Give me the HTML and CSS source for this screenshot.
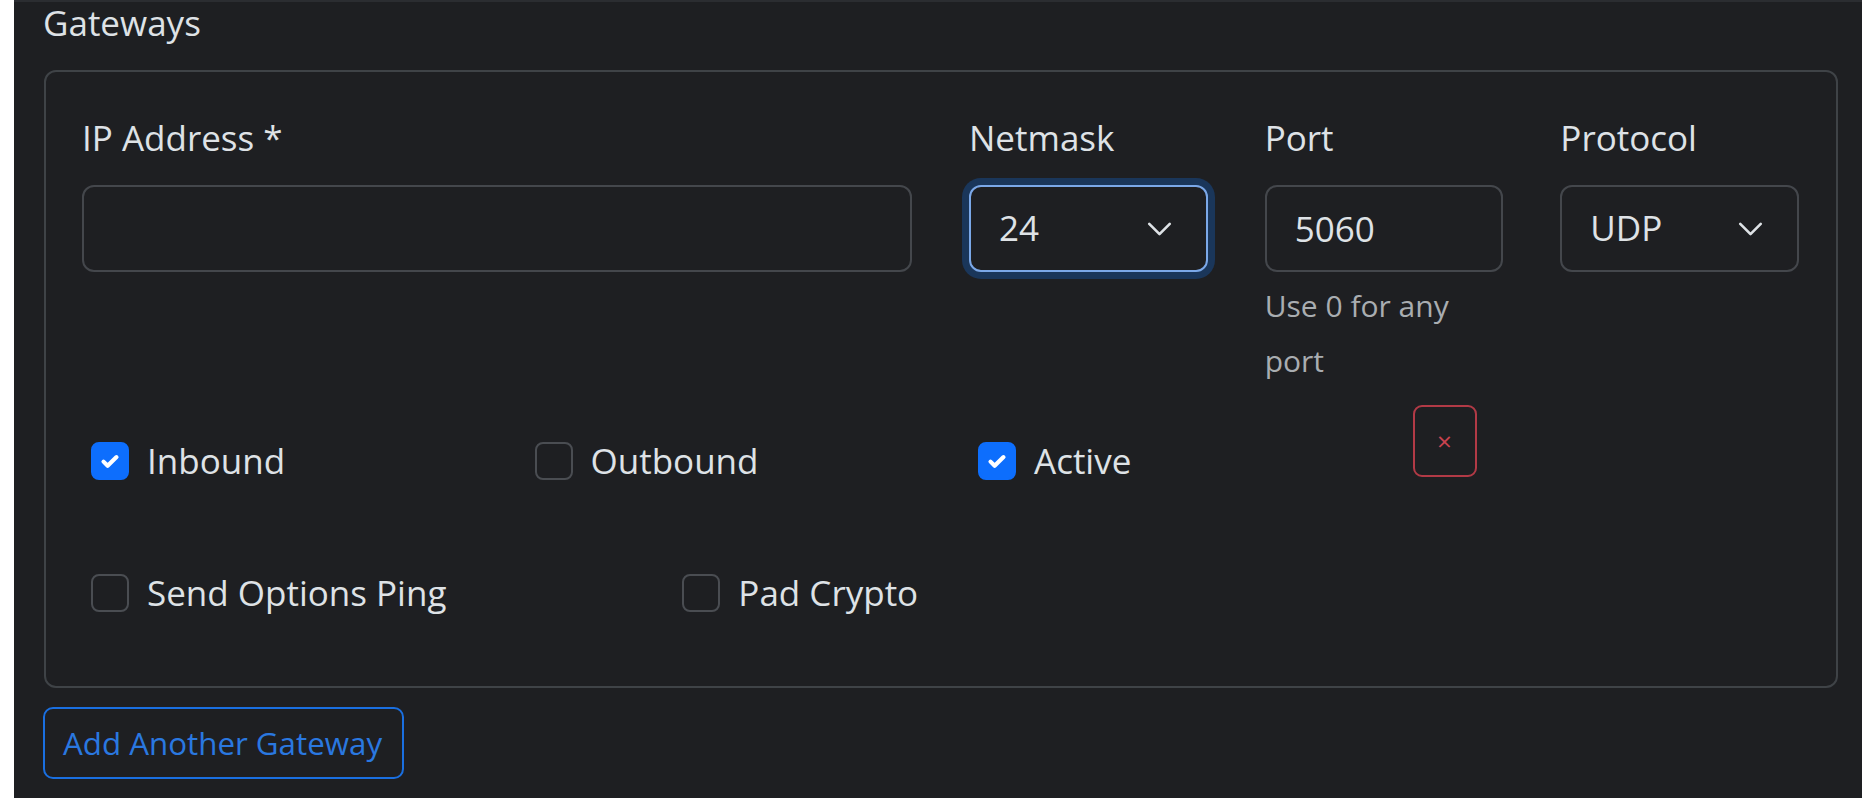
FILE: index.html
```html
<!DOCTYPE html>
<html lang="en">
<head>
<meta charset="utf-8">
<title>Gateways</title>
<link rel="stylesheet" href="styles.css">
</head>
<body>
<div class="panel">
  <div class="title">Gateways</div>
  <div class="card">
    <div class="grid fields">
      <div class="field span6">
        <label class="label">IP Address *</label>
        <input class="control" type="text" value="">
      </div>
      <div class="field span2">
        <label class="label">Netmask</label>
        <div class="select-wrap">
          <select class="control select focused"><option>24</option></select>
          <svg class="chevron" viewBox="0 0 26 15" width="25" height="14"><path d="M2 2l11 11L24 2" fill="none" stroke="#dee2e6" stroke-width="2.8" stroke-linecap="round" stroke-linejoin="round"/></svg>
        </div>
      </div>
      <div class="field span2">
        <label class="label">Port</label>
        <input class="control" type="text" value="5060">
        <div class="help">Use 0 for any<br>port</div>
      </div>
      <div class="field span2">
        <label class="label">Protocol</label>
        <div class="select-wrap">
          <select class="control select"><option>UDP</option></select>
          <svg class="chevron" viewBox="0 0 26 15" width="25" height="14"><path d="M2 2l11 11L24 2" fill="none" stroke="#dee2e6" stroke-width="2.8" stroke-linecap="round" stroke-linejoin="round"/></svg>
        </div>
      </div>
    </div>

    <div class="grid flags">
      <div class="span3"><div class="check"><span class="box on"><svg viewBox="0 0 20 20" width="26" height="26"><path d="M5 10.5l3.2 3.2L15 7" fill="none" stroke="#fff" stroke-width="3.2" stroke-linecap="round" stroke-linejoin="round"/></svg></span><span class="check-label">Inbound</span></div></div>
      <div class="span3"><div class="check"><span class="box"></span><span class="check-label">Outbound</span></div></div>
      <div class="span3"><div class="check"><span class="box on"><svg viewBox="0 0 20 20" width="26" height="26"><path d="M5 10.5l3.2 3.2L15 7" fill="none" stroke="#fff" stroke-width="3.2" stroke-linecap="round" stroke-linejoin="round"/></svg></span><span class="check-label">Active</span></div></div>
      <div class="span3"><button class="remove" type="button">×</button></div>
    </div>

    <div class="grid flags2">
      <div class="span4"><div class="check"><span class="box"></span><span class="check-label">Send Options Ping</span></div></div>
      <div class="span4"><div class="check"><span class="box"></span><span class="check-label">Pad Crypto</span></div></div>
    </div>
  </div>
  <button class="add" type="button">Add Another Gateway</button>
</div>
</body>
</html>
```

FILE: styles.css
```css
html, body {
  margin: 0;
  padding: 0;
  height: 100%;
  background: #ffffff;
}

body {
  font-family: "Open Sans", "Noto Sans", sans-serif;
  overflow: hidden;
}

.panel {
  margin-left: 14px;
  height: 100%;
  box-sizing: border-box;
  background: #1e1f22;
  border-top: 2px solid #2b2d31;
  padding: 0 24px 0 29px;
  color: #dee2e6;
}

.title {
  font-size: 35px;
  line-height: 42px;
  color: #dee2e6;
}

.card {
  margin-top: 26px;
  margin-left: 1px;
  border: 2px solid #3f4347;
  border-radius: 12px;
  padding: 40px 37px 67px 36px;
}

.grid {
  display: grid;
  grid-template-columns: repeat(12, 1fr);
  column-gap: 57px;
  align-items: start;
}

.span6 { grid-column: span 6; }
.span4 { grid-column: span 4; }
.span3 { grid-column: span 3; }
.span2 { grid-column: span 2; }

.field {
  display: flex;
  flex-direction: column;
}

.label {
  font-size: 35px;
  line-height: 52.5px;
  margin-bottom: 20.5px;
  color: #dee2e6;
}

.control {
  box-sizing: border-box;
  width: 100%;
  height: 87px;
  margin: 0;
  padding: 0 28px;
  font-family: "Open Sans", "Noto Sans", sans-serif;
  font-size: 35px;
  line-height: 52.5px;
  color: #dee2e6;
  background: #1e1f22;
  border: 2px solid #44474c;
  border-radius: 12px;
  outline: none;
}

.select-wrap {
  position: relative;
}

.select {
  -webkit-appearance: none;
  appearance: none;
}

.focused {
  border-color: #7ba8e8;
  box-shadow: 0 0 0 7px #1a365a;
}

.chevron {
  position: absolute;
  right: 36px;
  top: 37px;
  pointer-events: none;
}

.help {
  margin-top: 6px;
  font-size: 30px;
  line-height: 55px;
  color: #a9adb1;
}

.flags {
  margin-top: 17px;
}

.flags2 {
  margin-top: 49px;
}

.check {
  display: flex;
  align-items: center;
  margin-top: 30px;
  margin-left: 9px;
  font-size: 35px;
  line-height: 52.5px;
}

.box {
  box-sizing: border-box;
  width: 38px;
  height: 38px;
  flex: none;
  border: 2px solid #4a4d52;
  border-radius: 8px;
  background: #1e1f22;
  display: flex;
  align-items: center;
  justify-content: center;
}

.box.on {
  background: #0d6efd;
  border-color: #0d6efd;
}

.check-label {
  margin-left: 18px;
  color: #dee2e6;
}

.remove {
  box-sizing: border-box;
  width: 64px;
  height: 72px;
  padding: 0;
  margin: 0;
  background: transparent;
  border: 2px solid #b23a46;
  border-radius: 9px;
  color: #c9434f;
  font-family: "Open Sans", "Noto Sans", sans-serif;
  font-size: 26px;
  line-height: 1;
}

.add {
  box-sizing: border-box;
  display: block;
  margin-top: 19px;
  height: 72px;
  padding: 0 20px 0 18px;
  background: transparent;
  border: 2px solid #1a6fe0;
  border-radius: 10px;
  color: #2a78e0;
  font-family: "Open Sans", "Noto Sans", sans-serif;
  font-size: 31.3px;
  line-height: 45px;
}
```
